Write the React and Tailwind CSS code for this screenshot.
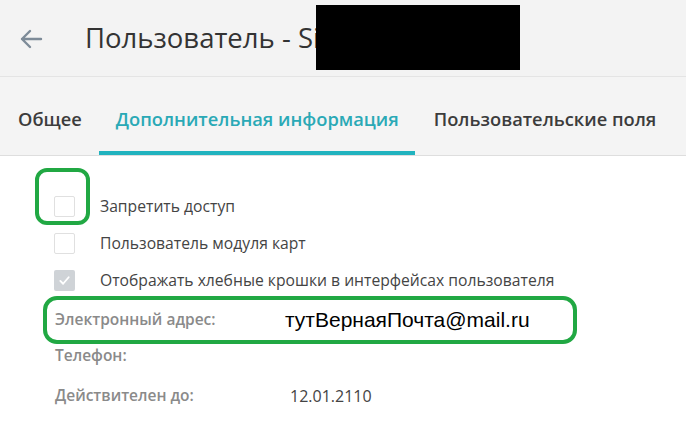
import React from 'react';

function Checkbox({ checked }) {
  if (checked) {
    return (
      <span className="flex h-[21px] w-[21px] items-center justify-center rounded-[2px] bg-[#cfd3d7]">
        <svg width="13" height="13" viewBox="0 0 14 14" fill="none">
          <path d="M2.5 7.5 L5.5 10.5 L11.5 3.5" stroke="#fff" strokeWidth="2" strokeLinecap="round" strokeLinejoin="round" />
        </svg>
      </span>
    );
  }
  return <span className="block h-[21px] w-[21px] rounded-[2px] border border-[#e0e0e0] bg-white" />;
}

function CheckRow({ checked, label, marked }) {
  return (
    <div className="relative flex h-[37px] items-center">
      <div className="ml-[54px] mr-[25px]">
        <Checkbox checked={checked} />
      </div>
      <span className="text-[15.7px] text-[#444]">{label}</span>
      {/* green annotation drawn over the first checkbox */}
      {marked && (
        <span className="absolute left-[35px] top-[-20px] h-[57px] w-[55px] rounded-[12px] border-[4px] border-[#21a843]" />
      )}
    </div>
  );
}

export default function App() {
  return (
    <div className="h-[425px] w-[686px] overflow-hidden bg-white" style={{ fontFamily: '"Open Sans", sans-serif' }}>
      {/* header */}
      <div className="flex h-[77px] items-start border-b border-[#e4e4e4] bg-[#f3f3f3]">
        <svg className="ml-[19px] mt-[28px]" width="24" height="22" viewBox="0 0 24 22" fill="none">
          <path d="M22 11 H3 M11 3 L3 11 L11 19" stroke="#7d8b98" strokeWidth="2.4" strokeLinecap="round" strokeLinejoin="round" />
        </svg>
        <h1 className="ml-[42px] mt-[19px] whitespace-nowrap text-[27.5px] leading-[38px] text-[#333]">Пользователь - Si</h1>
        <div className="ml-[-4px] mt-[5px] h-[65px] w-[204px] bg-black" />
      </div>

      {/* tabs */}
      <div className="flex h-[79px] items-stretch border-b border-[#dedede] bg-[#f4f4f4] text-[18.3px] font-semibold">
        <div className="flex items-center pl-[18px] pr-[17px] pt-[5px] text-[#3c3c3c]">Общее</div>
        <div className="flex items-center border-b-[4px] border-[#21b3bf] pl-[17px] pr-[16px] pt-[9px] text-[#2aa9b6]">Дополнительная информация</div>
        <div className="flex items-center pl-[19px] pt-[5px] text-[#3c3c3c]">Пользовательские поля</div>
      </div>

      {/* content */}
      <div className="pt-[32px]">
        <CheckRow label="Запретить доступ" marked />
        <CheckRow label="Пользователь модуля карт" />
        <CheckRow checked label="Отображать хлебные крошки в интерфейсах пользователя" />

        <div className="ml-[43px] mt-[-3px] flex h-[48px] w-[534px] items-center rounded-[14px] border-[4px] border-[#21a843]">
          <span className="ml-[8px] w-[230px] text-[15.5px] font-semibold text-[#8a8a8a]">Электронный адрес:</span>
          <span className="text-[21px] text-black" style={{ fontFamily: '"Liberation Sans", sans-serif' }}>тутВернаяПочта@mail.ru</span>
        </div>

        <div className="flex h-[24px] items-center pl-[55px]">
          <span className="text-[15.5px] font-semibold text-[#8a8a8a]">Телефон:</span>
        </div>
        <div className="flex h-[56px] items-center pl-[55px]">
          <span className="w-[235px] text-[15.5px] font-semibold text-[#8a8a8a]">Действителен до:</span>
          <span className="text-[16px] text-[#444]">12.01.2110</span>
        </div>
      </div>
    </div>
  );
}
